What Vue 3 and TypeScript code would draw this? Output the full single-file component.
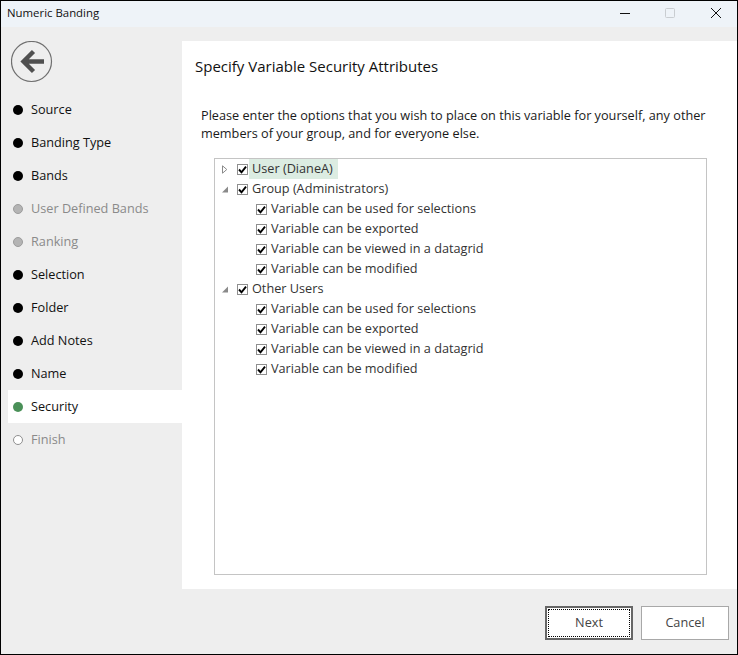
<script setup lang="ts">
type Step = { label: string; state: 'done' | 'off' | 'active' | 'todo' }

const steps: Step[] = [
  { label: 'Source', state: 'done' },
  { label: 'Banding Type', state: 'done' },
  { label: 'Bands', state: 'done' },
  { label: 'User Defined Bands', state: 'off' },
  { label: 'Ranking', state: 'off' },
  { label: 'Selection', state: 'done' },
  { label: 'Folder', state: 'done' },
  { label: 'Add Notes', state: 'done' },
  { label: 'Name', state: 'done' },
  { label: 'Security', state: 'active' },
  { label: 'Finish', state: 'todo' }
]

const perms = [
  'Variable can be used for selections',
  'Variable can be exported',
  'Variable can be viewed in a datagrid',
  'Variable can be modified'
]

const groups = [
  { label: 'User (DianeA)', open: false, selected: true, items: [] as string[] },
  { label: 'Group (Administrators)', open: true, selected: false, items: perms },
  { label: 'Other Users', open: true, selected: false, items: perms }
]
</script>

<template>
  <div class="window">
    <header class="titlebar">
      <span class="title">Numeric Banding</span>
      <div class="controls">
        <svg width="46" height="26" viewBox="0 0 46 26"><path d="M21 12.5h10" stroke="#111" fill="none" /></svg>
        <svg width="46" height="26" viewBox="0 0 46 26"><rect x="20.5" y="7.5" width="9" height="9" rx="1" stroke="#c9cdd1" fill="none" /></svg>
        <svg width="46" height="26" viewBox="0 0 46 26"><path d="M20 7l10 10M30 7L20 17" stroke="#111" fill="none" /></svg>
      </div>
    </header>

    <div class="body">
      <aside class="sidebar">
        <button class="back" aria-label="Back">
          <svg width="42" height="42" viewBox="0 0 42 42">
            <circle cx="20.5" cy="20.5" r="20" fill="none" stroke="#6f6f6f" stroke-width="1.2" />
            <path d="M33 20.5H15M22.5 10.5l-10 10 10 10" fill="none" stroke="#505050" stroke-width="4.4" />
          </svg>
        </button>
        <ul class="steps">
          <li v-for="step in steps" :key="step.label" class="step" :class="step.state">
            <span class="dot"></span>
            <span class="step-label">{{ step.label }}</span>
          </li>
        </ul>
      </aside>

      <main class="panel">
        <h1>Specify Variable Security Attributes</h1>
        <p class="intro">Please enter the options that you wish to place on this variable for yourself, any other members of your group, and for everyone else.</p>

        <div class="tree">
          <template v-for="group in groups" :key="group.label">
            <div class="row">
              <svg class="arrow" width="8" height="9" viewBox="0 0 8 9">
                <path v-if="group.open" d="M7 1.5V7.5H1z" fill="#8a8a8a" />
                <path v-else d="M1.5 0.8L5.8 4.5L1.5 8.2z" fill="#fff" stroke="#8a8a8a" />
              </svg>
              <span class="check">
                <svg width="9" height="9" viewBox="0 0 9 9"><path d="M1 4.5l2.5 2.8L8 1.6" fill="none" stroke="#000" stroke-width="1.9" /></svg>
              </span>
              <span class="label" :class="{ selected: group.selected }">{{ group.label }}</span>
            </div>
            <div v-for="item in group.items" :key="item" class="row child">
              <span class="check">
                <svg width="9" height="9" viewBox="0 0 9 9"><path d="M1 4.5l2.5 2.8L8 1.6" fill="none" stroke="#000" stroke-width="1.9" /></svg>
              </span>
              <span class="label">{{ item }}</span>
            </div>
          </template>
        </div>
      </main>
    </div>

    <footer class="footer">
      <button class="btn primary"><span class="focus">Next</span></button>
      <button class="btn">Cancel</button>
    </footer>
  </div>
</template>

<style>
html,
body {
  margin: 0;
  overflow: hidden;
}
</style>

<style scoped>
.window {
  box-sizing: border-box;
  width: 738px;
  height: 655px;
  display: flex;
  flex-direction: column;
  border: 1px solid #000;
  background: #eeeeee;
  font-family: 'Open Sans', 'Noto Sans', sans-serif;
  font-size: 12.7px;
  color: #111;
}

.titlebar {
  flex: none;
  height: 26px;
  display: flex;
  justify-content: space-between;
  align-items: center;
  padding-left: 6px;
  background: #eef3f8;
}

.title {
  font-size: 11.4px;
  line-height: 24px;
  margin-top: -2px;
  color: #111;
}

.controls {
  display: flex;
}

.controls svg {
  display: block;
}

.body {
  flex: 1;
  display: flex;
  min-height: 0;
  padding-top: 14px;
}

.sidebar {
  flex: none;
  width: 181px;
  padding-left: 7px;
  box-sizing: border-box;
}

.back {
  display: block;
  margin: 0 0 10px 3px;
  padding: 0;
  border: 0;
  background: none;
  height: 42px;
}

.steps {
  list-style: none;
  margin: 0;
  padding: 0;
}

.step {
  height: 33px;
  display: flex;
  align-items: center;
  gap: 8px;
  padding-left: 5px;
}

.step-label {
  line-height: 18px;
  margin-top: -2px;
}

.dot {
  width: 10px;
  height: 10px;
  border-radius: 50%;
  background: #000;
  box-sizing: border-box;
}

.step.off {
  color: #8a8a8a;
}

.step.off .dot {
  background: #b4b4b4;
  border: 1px solid #9c9c9c;
}

.step.active {
  background: #fff;
}

.step.active .dot {
  background: #4a9058;
}

.step.todo {
  color: #8a8a8a;
}

.step.todo .dot {
  background: #fff;
  border: 1.5px solid #8f8f8f;
}

.panel {
  flex: 1;
  background: #fff;
  padding: 14px 30px 14px 13px;
  display: flex;
  flex-direction: column;
  min-width: 0;
}

h1 {
  margin: 0;
  font-size: 15px;
  font-weight: 400;
  line-height: 22px;
  color: #111;
}

.intro {
  margin: 29px 0 0 6px;
  line-height: 18px;
  width: 510px;
  color: #1a1a1a;
}

.tree {
  flex: 1;
  margin: 16px 0 0 19px;
  padding: 0;
  border: 1px solid #c4c4c4;
  background: #fff;
}

.row {
  height: 20px;
  display: flex;
  align-items: center;
  padding-left: 6px;
}

.row.child {
  padding-left: 41px;
}

.arrow {
  flex: none;
  margin-right: 8px;
}

.check {
  flex: none;
  box-sizing: border-box;
  width: 11px;
  height: 11px;
  border: 1px solid #8f8f8f;
  display: flex;
  align-items: center;
  justify-content: center;
  background: #fff;
}

.label {
  margin-left: 1px;
  padding: 0 5px 0 3px;
  height: 20px;
  line-height: 18px;
  color: #333;
}

.label.selected {
  background: #dcece2;
}

.footer {
  flex: none;
  height: 65px;
  display: flex;
  justify-content: flex-end;
  align-items: flex-start;
  gap: 8px;
  padding: 17px 8px 0 0;
  box-sizing: border-box;
}

.btn {
  box-sizing: border-box;
  width: 88px;
  height: 34px;
  border: 1px solid #a8a8a8;
  background: #fff;
  font: inherit;
  color: #444;
  padding: 0 0 2px;
}

.btn.primary {
  border: 2px solid #666;
  padding: 1px;
}

.focus {
  display: flex;
  height: 100%;
  align-items: center;
  justify-content: center;
  border: 1px dotted #000;
  box-sizing: border-box;
  padding-bottom: 2px;
}
</style>
